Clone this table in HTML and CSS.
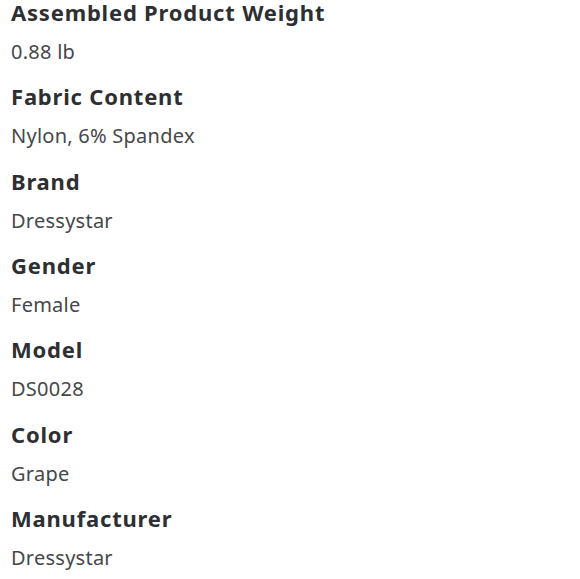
FILE: index.html
```html
<!DOCTYPE html>
<html lang="en">
<head>
<meta charset="utf-8">
<link rel="stylesheet" href="styles.css">
</head>
<body>
<div class="specs">
  <div class="spec"><h3 class="spec-name">Assembled Product Weight</h3><div class="spec-value">0.88 lb</div></div>
  <div class="spec"><h3 class="spec-name">Fabric Content</h3><div class="spec-value">Nylon, 6% Spandex</div></div>
  <div class="spec"><h3 class="spec-name">Brand</h3><div class="spec-value">Dressystar</div></div>
  <div class="spec"><h3 class="spec-name">Gender</h3><div class="spec-value">Female</div></div>
  <div class="spec"><h3 class="spec-name">Model</h3><div class="spec-value">DS0028</div></div>
  <div class="spec"><h3 class="spec-name">Color</h3><div class="spec-value">Grape</div></div>
  <div class="spec"><h3 class="spec-name">Manufacturer</h3><div class="spec-value">Dressystar</div></div>
</div>
</body>
</html>
```
FILE: styles.css
```css
html, body {
  margin: 0;
  padding: 0;
  background: #fff;
}
.specs {
  display: flex;
  flex-direction: column;
  gap: 18.33px;
  padding: 0 11px;
  font-family: "Noto Sans", Lato, sans-serif;
}
.spec {
  display: flex;
  flex-direction: column;
  gap: 14px;
}
.spec-name {
  margin: 0;
  font-size: 22px;
  line-height: 24px;
  font-weight: 700;
  letter-spacing: 0.8px;
  color: #2e2f32;
}
.spec-value {
  font-size: 20px;
  line-height: 28px;
  font-weight: 400;
  letter-spacing: 0.25px;
  color: #46474a;
}
```
